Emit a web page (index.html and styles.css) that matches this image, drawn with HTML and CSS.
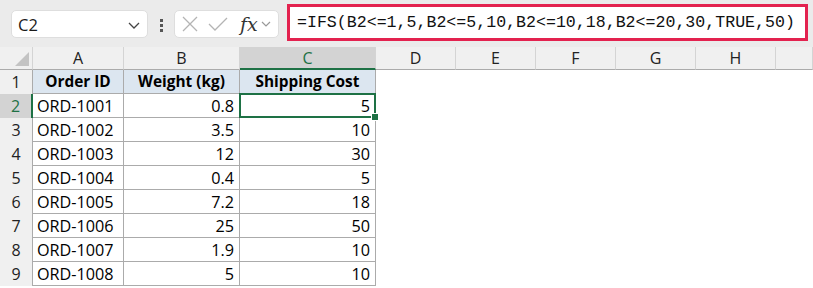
FILE: index.html
```html
<!DOCTYPE html>
<html>
<head>
<meta charset="utf-8">
<link rel="stylesheet" href="styles.css">
</head>
<body>
<div class="toolbar">
  <div class="namebox">
    <span class="nb-text">C2</span>
    <svg class="nb-chev" width="12" height="7" viewBox="0 0 12 7"><path d="M1 1 L6 6 L11 1" fill="none" stroke="#444" stroke-width="1.3"/></svg>
  </div>
  <div class="dots"><i></i><i></i><i></i></div>
  <div class="fxbox">
    <svg width="16" height="16" viewBox="0 0 16 16"><path d="M1 1 L15 15 M15 1 L1 15" stroke="#b4b4b4" stroke-width="1.3" fill="none"/></svg>
    <svg width="20" height="14" viewBox="0 0 20 14"><path d="M1 7 L7 13 L19 1" stroke="#b4b4b4" stroke-width="1.3" fill="none"/></svg>
    <span class="fx">fx</span>
    <svg width="10" height="6" viewBox="0 0 10 6"><path d="M1 1 L5 5 L9 1" fill="none" stroke="#999" stroke-width="1.2"/></svg>
  </div>
  <div class="formula">=IFS(B2&lt;=1,5,B2&lt;=5,10,B2&lt;=10,18,B2&lt;=20,30,TRUE,50)</div>
</div>
<div class="sheet">
  <div class="corner"><span class="tri"></span></div>
  <div class="ch">A</div><div class="ch">B</div><div class="ch sel">C</div><div class="ch">D</div><div class="ch">E</div><div class="ch">F</div><div class="ch">G</div><div class="ch">H</div><div class="ch last"></div>

  <div class="rh">1</div><div class="c hd">Order ID</div><div class="c hd">Weight (kg)</div><div class="c hd">Shipping Cost</div><div class="e"></div><div class="e"></div><div class="e"></div><div class="e"></div><div class="e"></div><div class="e"></div>

  <div class="rh sel">2</div><div class="c">ORD-1001</div><div class="c n">0.8</div><div class="c n active">5</div><div class="e"></div><div class="e"></div><div class="e"></div><div class="e"></div><div class="e"></div><div class="e"></div>

  <div class="rh">3</div><div class="c">ORD-1002</div><div class="c n">3.5</div><div class="c n">10</div><div class="e"></div><div class="e"></div><div class="e"></div><div class="e"></div><div class="e"></div><div class="e"></div>

  <div class="rh">4</div><div class="c">ORD-1003</div><div class="c n">12</div><div class="c n">30</div><div class="e"></div><div class="e"></div><div class="e"></div><div class="e"></div><div class="e"></div><div class="e"></div>

  <div class="rh">5</div><div class="c">ORD-1004</div><div class="c n">0.4</div><div class="c n">5</div><div class="e"></div><div class="e"></div><div class="e"></div><div class="e"></div><div class="e"></div><div class="e"></div>

  <div class="rh">6</div><div class="c">ORD-1005</div><div class="c n">7.2</div><div class="c n">18</div><div class="e"></div><div class="e"></div><div class="e"></div><div class="e"></div><div class="e"></div><div class="e"></div>

  <div class="rh">7</div><div class="c">ORD-1006</div><div class="c n">25</div><div class="c n">50</div><div class="e"></div><div class="e"></div><div class="e"></div><div class="e"></div><div class="e"></div><div class="e"></div>

  <div class="rh">8</div><div class="c">ORD-1007</div><div class="c n">1.9</div><div class="c n">10</div><div class="e"></div><div class="e"></div><div class="e"></div><div class="e"></div><div class="e"></div><div class="e"></div>

  <div class="rh">9</div><div class="c">ORD-1008</div><div class="c n">5</div><div class="c n">10</div><div class="e"></div><div class="e"></div><div class="e"></div><div class="e"></div><div class="e"></div><div class="e"></div>
</div>
</body>
</html>
```
FILE: styles.css
```css
* { box-sizing: border-box; }
html, body { margin: 0; padding: 0; }
body {
  width: 813px;
  height: 288px;
  overflow: hidden;
  background: #fff;
  font-family: "Open Sans", "Noto Sans", sans-serif;
  color: #000;
}
.toolbar {
  height: 47px;
  background: #ebebeb;
  display: flex;
  align-items: flex-start;
  padding-left: 11px;
}
.namebox {
  margin-top: 10px;
  width: 137px;
  height: 28px;
  background: #fff;
  border: 1px solid #dedede;
  border-radius: 5px;
  display: flex;
  align-items: center;
  justify-content: space-between;
  padding: 0 7px 0 6px;
}
.nb-text { font-size: 16.5px; color: #1a1a1a; }
.nb-chev { margin-top: 2px; }
.dots {
  margin: 19px 0 0 12px;
  width: 3px;
  display: flex;
  flex-direction: column;
  gap: 2px;
}
.dots i { display: block; width: 3px; height: 3px; background: #555; }
.fxbox {
  margin: 10px 0 0 11px;
  width: 105px;
  height: 28px;
  background: #fff;
  border: 1px solid #dedede;
  border-radius: 5px;
  display: flex;
  align-items: center;
  padding-left: 7px;
  gap: 10px;
}
.fx {
  font-family: "DejaVu Serif", "Liberation Serif", serif;
  font-style: italic;
  font-size: 19px;
  line-height: 20px;
  color: #333;
  margin-left: 2px;
  margin-right: -7px;
}
.formula {
  margin: 4px 0 0 8px;
  width: 521px;
  height: 37px;
  border: 3px solid #e3224f;
  background: #fff;
  font-family: "Liberation Mono", "DejaVu Sans Mono", monospace;
  font-size: 16.6px;
  line-height: 31px;
  padding-left: 7px;
  color: #111;
  white-space: nowrap;
}
.sheet {
  display: grid;
  grid-template-columns: 33px 91px 116px 136px 80px 80px 80px 80px 80px 37px;
  grid-template-rows: 23px repeat(9, 24px);
  font-size: 16px;
}
.corner {
  background: #f0f0f0;
  border-bottom: 1px solid #ababab;
  border-right: 1px solid #d4d4d4;
  position: relative;
}
.tri {
  position: absolute;
  right: 3px;
  bottom: 3px;
  width: 0;
  height: 0;
  border-left: 14px solid transparent;
  border-bottom: 14px solid #c3c3c3;
}
.ch {
  background: #f0f0f0;
  border-bottom: 1px solid #ababab;
  border-right: 1px solid #d4d4d4;
  display: flex;
  align-items: center;
  justify-content: center;
  color: #222;
}
.ch.sel {
  background: #d3d3d3;
  color: #1e7145;
  border-bottom: 2px solid #1e7145;
}
.rh {
  background: #f0f0f0;
  border-right: 1px solid #ababab;
  display: flex;
  align-items: center;
  justify-content: center;
  color: #222;
}
.rh.sel {
  background: #d3d3d3;
  color: #1e7145;
  border-right: 2px solid #1e7145;
}
.c {
  border-right: 1px solid #ababab;
  border-bottom: 1px solid #ababab;
  display: flex;
  align-items: center;
  padding: 0 5px 0 4px;
  white-space: nowrap;
  font-size: 16.2px;
}
.c.hd {
  background: #dce6f0;
  font-size: 15.4px;
  font-weight: 700;
  justify-content: center;
  padding: 0;
}
.c.n { justify-content: flex-end; }
.e { background: #fff; }
.active { position: relative; }
.active::after {
  content: "";
  position: absolute;
  left: -1px;
  top: -1px;
  right: -1px;
  bottom: -1px;
  border: 2px solid #1e7145;
}
.active::before {
  content: "";
  position: absolute;
  right: -4px;
  bottom: -4px;
  width: 6px;
  height: 6px;
  background: #1e7145;
  border: 1px solid #fff;
  z-index: 2;
}
```
